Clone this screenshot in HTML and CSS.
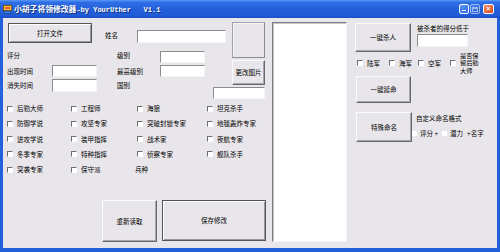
FILE: index.html
```html
<!DOCTYPE html>
<html lang="zh">
<head>
<meta charset="utf-8">
<title>小胡子将领修改器</title>
<link rel="stylesheet" href="styles.css">
</head>
<body>
<div class="window">
  <div class="titlebar">
    <svg class="appicon" width="9" height="9" viewBox="0 0 9 9">
      <rect x="0.5" y="0.5" width="8" height="5" fill="#f4c24a" stroke="#8a5a10" stroke-width="1"/>
      <rect x="2" y="2" width="5" height="2" fill="#e4602a"/>
      <rect x="1" y="6" width="7" height="2.5" fill="#3a7ee0" stroke="#1c3c88" stroke-width="0.6"/>
    </svg>
    <span class="title">小胡子将领修改器<span class="lat">-by YourUther&nbsp;&nbsp;&nbsp;V1.1</span></span>
    <div class="ctrls">
      <span class="wb min"><i></i></span>
      <span class="wb max"><i></i></span>
      <span class="wb close">&#x2715;</span>
    </div>
  </div>
  <div class="client">
    <div class="left">
      <div class="top">
        <div class="fields">
          <div class="namerow">
            <div class="btn def open">打开文件</div>
            <span class="lbl name-lbl">姓名</span>
            <span class="inp name-inp"></span>
          </div>
          <div class="fgrid">
            <span class="lbl r1">评分</span><span></span><span class="lbl r1">级别</span><span class="inp w45"></span>
            <span class="lbl">出现时间</span><span class="inp w45"></span><span class="lbl">最高级别</span><span class="inp w45"></span>
            <span class="lbl">消失时间</span><span class="inp w45"></span><span class="lbl">国别</span><span></span>
          </div>
        </div>
        <div class="piccol">
          <div class="picbox"></div>
          <div class="btn chpic">更改图片</div>
          <span class="inp picinp"></span>
        </div>
      </div>
      <div class="checks">
        <label class="ck"><span class="cb"></span>后勤大师</label>
        <label class="ck"><span class="cb"></span>工程师</label>
        <label class="ck"><span class="cb"></span>海狼</label>
        <label class="ck"><span class="cb"></span>坦克杀手</label>
        <label class="ck"><span class="cb"></span>防御学说</label>
        <label class="ck"><span class="cb"></span>攻坚专家</label>
        <label class="ck"><span class="cb"></span>突破封锁专家</label>
        <label class="ck"><span class="cb"></span>地毯轰炸专家</label>
        <label class="ck"><span class="cb"></span>进攻学说</label>
        <label class="ck"><span class="cb"></span>装甲指挥</label>
        <label class="ck"><span class="cb"></span>战术家</label>
        <label class="ck"><span class="cb"></span>夜航专家</label>
        <label class="ck"><span class="cb"></span>冬季专家</label>
        <label class="ck"><span class="cb"></span>特种指挥</label>
        <label class="ck"><span class="cb"></span>侦察专家</label>
        <label class="ck"><span class="cb"></span>舰队杀手</label>
        <label class="ck"><span class="cb"></span>突袭专家</label>
        <label class="ck"><span class="cb"></span>保守派</label>
        <span class="lbl bz">兵种</span>
      </div>
      <div class="bottom">
        <div class="btn reload">重新读取</div>
        <div class="btn def save">保存修改</div>
      </div>
    </div>
    <div class="list"></div>
    <div class="right">
      <div class="rrow1">
        <div class="btn kill">一键杀人</div>
        <div class="killcol">
          <span class="lbl">被杀者的得分低于</span>
          <span class="inp killinp"></span>
        </div>
      </div>
      <div class="rchecks">
        <label class="ck"><span class="cb"></span>陆军</label>
        <label class="ck"><span class="cb"></span>海军</label>
        <label class="ck"><span class="cb"></span>空军</label>
        <label class="ck"><span class="cb"></span><span class="ml">是否保<br>留后勤<br>大师</span></label>
      </div>
      <div class="btn extend">一键延命</div>
      <div class="rrow4">
        <div class="btn special">特殊命名</div>
        <div class="fmtcol">
          <span class="lbl fmt">自定义命名格式</span>
          <div class="fmtrow">
            <span class="cb wcb"></span><span class="t1">评分 +</span><span class="cb wcb c2"></span><span class="t2">潜力</span><span class="t3">+名字</span>
          </div>
        </div>
      </div>
    </div>
  </div>
</div>
</body>
</html>
```
FILE: styles.css
```css
* { box-sizing: border-box; margin: 0; padding: 0; }
body {
  width: 500px; height: 252px; overflow: hidden; background: #fff;
  font-family: "Noto Sans CJK SC", "Liberation Sans", sans-serif;
  font-size: 6.5px; line-height: 7px; color: #000;
}
.window { width: 500px; height: 252px; display: flex; flex-direction: column; background: #2360dc; }
.titlebar {
  height: 18px; flex: none; display: flex; align-items: center; padding-left: 3px;
  background: linear-gradient(#5a9af6 0%, #2f6fe6 12%, #2461dc 50%, #215bd6 85%, #1a4fc8 100%);
  color: #fff;
}
.appicon { display: block; flex: none; }
.title {
  margin-left: 2px; font-family: "Noto Sans CJK SC", sans-serif; font-size: 7.8px; font-weight: bold;
  line-height: 9px; white-space: pre; text-shadow: 1px 1px 0 #10307a;
}
.title .lat { font-family: "Liberation Mono", monospace; font-size: 7px; }
.ctrls { margin-left: auto; margin-right: 6px; display: flex; align-items: center; }
.wb {
  width: 10px; height: 10px; border: 1px solid #fff; border-radius: 2px;
  background: linear-gradient(135deg, #5b9cf8, #2a64e0); position: relative;
  display: flex; align-items: center; justify-content: center; color: #fff;
}
.wb.max { margin-left: 1px; opacity: .55; }
.wb.min i { position: absolute; left: 2px; bottom: 2px; width: 4px; height: 1px; background: #fff; }
.wb.max i { width: 6px; height: 5px; border: 1px solid #fff; border-top-width: 2px; }
.wb.close {
  margin-left: 3px; width: 11px; background: linear-gradient(135deg, #f08a60, #d8461e);
  font-size: 7px; line-height: 8px; font-weight: bold; font-family: "DejaVu Sans", sans-serif;
}
.client { flex: 1; margin: 0 3px 4px 3px; background: #e8e6ea; display: flex; }

/* controls */
.btn {
  display: flex; align-items: center; justify-content: center; background: #e8e6ea;
  border: 1px solid; border-color: #fbfbfb #6a6a6a #6a6a6a #fbfbfb;
  box-shadow: inset -1px -1px 0 #a8a6aa;
}
.btn.def { border: 1px solid #555; box-shadow: inset 1px 1px 0 #fff, inset -1px -1px 0 #9a989c; }
.inp {
  display: block; background: #fff;
  border: 1px solid; border-color: #8c8c8c #f4f4f4 #f4f4f4 #8c8c8c;
}
.lbl { white-space: nowrap; }
.cb {
  display: inline-block; width: 6px; height: 6px; flex: none; background: #fff;
  border-top: 1px solid #6e6e6e; border-left: 1px solid #6e6e6e;
  border-right: 1px solid #fff; border-bottom: 1px solid #fff;
}
.ck { display: flex; align-items: center; white-space: nowrap; }
.ck .cb { margin-right: 4px; }

/* left */
.left { width: 265px; flex: none; display: flex; flex-direction: column; }
.top { display: flex; height: 81px; }
.fields { width: 229px; flex: none; }
.namerow { display: flex; align-items: flex-start; margin-top: 5px; }
.open { width: 84px; height: 20px; margin-left: 5px; }
.name-lbl { margin-left: 13px; margin-top: 9px; }
.name-inp { margin-left: 19px; margin-top: 7px; width: 89px; height: 13px; }
.fgrid {
  display: grid; margin: 8px 0 0 4px;
  grid-template-columns: 45px 65px 43px 45px; grid-template-rows: 12px 12px 13px; row-gap: 2px;
  align-items: center;
}
.fgrid .r1 { align-self: start; margin-top: 1px; }
.fgrid .w45 { width: 45px; height: 100%; }
.piccol { width: 33px; flex: none; display: flex; flex-direction: column; }
.picbox {
  margin-top: 4px; height: 36px; background: #e8e6ea;
  border: 1px solid; border-color: #a4a4a4 #8c8c8c #8c8c8c #a4a4a4;
  box-shadow: inset 1px 1px 0 #f6f6f6;
}
.chpic { margin-top: 2px; height: 25px; }
.picinp { margin-top: 2px; height: 12px; width: 52px; margin-left: -19px; }

.checks {
  display: grid; margin: 2px 0 0 4px;
  grid-template-columns: 64px 66px 70px 60px; grid-auto-rows: 15.25px; align-items: center;
}
.checks .bz { margin-left: -2px; }
.bottom { display: flex; align-items: flex-start; margin-top: 23px; padding-left: 99px; }
.reload { width: 55px; height: 42px; }
.save { width: 104px; height: 41px; margin-left: 5px; }

/* list */
.list {
  width: 75px; height: 220px; margin: 4px 0 0 4px; flex: none; background: #fff;
  border: 1px solid; border-color: #7c7c7c #f4f4f4 #f4f4f4 #7c7c7c;
  box-shadow: inset 1px 1px 0 #c8c8c8;
}

/* right */
.right { margin-left: 8px; width: 140px; display: flex; flex-direction: column; }
.rrow1 { display: flex; align-items: flex-start; }
.kill { margin-top: 5px; width: 56px; height: 29px; }
.killcol { margin-left: 6px; margin-top: 7px; display: flex; flex-direction: column; }
.killinp { margin-top: 2px; width: 51px; height: 13px; }
.rchecks {
  display: grid; grid-template-columns: 32px 29px 32px auto; align-items: center;
  height: 21px; margin-left: 2px;
}
.rchecks .ml { width: 22px; white-space: normal; font-size: 6.2px; line-height: 7.4px; }
.extend { margin-top: 3px; margin-left: 1px; width: 55px; height: 27px; }
.rrow4 { display: flex; align-items: flex-start; margin-top: 9px; margin-left: 1px; }
.special { width: 56px; height: 30px; }
.fmtcol { display: flex; flex-direction: column; }
.fmt { margin-left: 4px; margin-top: 3px; }
.fmtrow { display: flex; align-items: center; margin-top: 8px; white-space: pre; }
.wcb { width: 5px; height: 5px; border: none; }
.t1 { margin-left: 3px; }
.c2 { margin-left: 4px; }
.t2 { margin-left: 3px; }
.t3 { margin-left: 4px; }
```
